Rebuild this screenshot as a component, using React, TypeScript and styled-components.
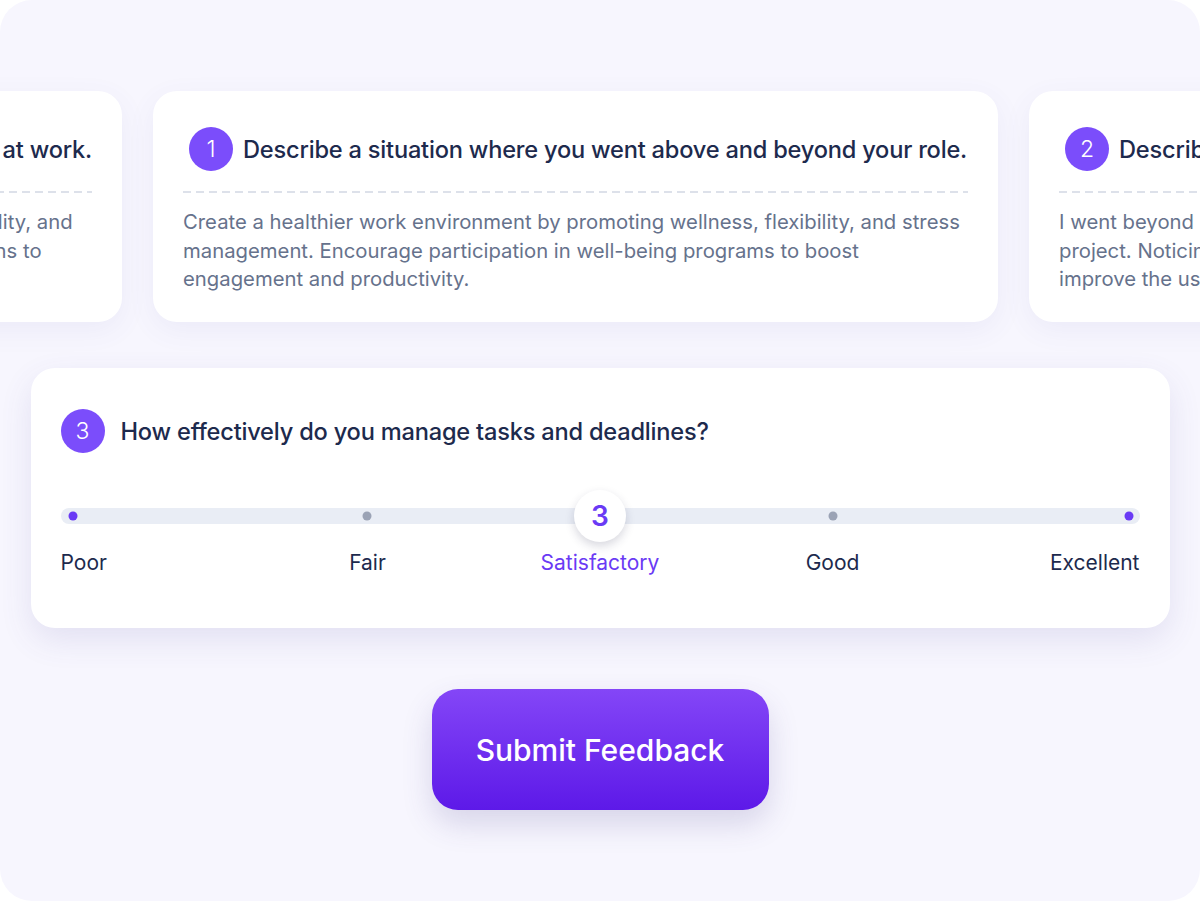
import React from 'react';
import styled, { createGlobalStyle } from 'styled-components';

const GlobalStyle = createGlobalStyle`
  html, body {
    margin: 0;
    padding: 0;
    background: #ffffff;
  }
  body {
    font-family: Inter, "Noto Sans", "Liberation Sans", sans-serif;
    -webkit-font-smoothing: antialiased;
  }
`;

interface Answer {
  id: number;
  title: string;
  lines: string[];
}

const answers: Array<Answer> = [
  {
    id: 4,
    title: 'Share one example of how you support a positive culture at work.',
    lines: [
      'Foster a healthier, calm work environment by promoting wellness, flexibility, and',
      'stress management. Encourage active participation in well-being sessions to',
      'boost engagement.',
    ],
  },
  {
    id: 1,
    title: 'Describe a situation where you went above and beyond your role.',
    lines: [
      'Create a healthier work environment by promoting wellness, flexibility, and stress',
      'management. Encourage participation in well-being programs to boost',
      'engagement and productivity.',
    ],
  },
  {
    id: 2,
    title: 'Describe a challenge you faced and how you resolved it.',
    lines: [
      'I went beyond my responsibilities by leading a critical client',
      'project. Noticing gaps in the workflow, I proposed changes to',
      'improve the user experience and delivery time.',
    ],
  },
];

const scale = [
  { label: 'Poor', pos: 'start' },
  { label: 'Fair', pos: '28.45%' },
  { label: 'Satisfactory', pos: '50%' },
  { label: 'Good', pos: '71.55%' },
  { label: 'Excellent', pos: 'end' },
];

const selected = 2;

const App = () => {
  return (
    <>
      <GlobalStyle />
      <Frame>
        <Carousel>
          {answers.map((item) => (
            <AnswerCard key={item.id}>
              <CardHeader>
                <Badge>{item.id}</Badge>
                <Question>{item.title}</Question>
              </CardHeader>
              <Dashed />
              <Body>
                {item.lines.map((line, i) => (
                  <span key={i}>{line}<br /></span>
                ))}
              </Body>
            </AnswerCard>
          ))}
        </Carousel>

        <RatingCard>
          <RatingHeader>
            <Badge>3</Badge>
            <Question>How effectively do you manage tasks and deadlines?</Question>
          </RatingHeader>

          <Slider>
            <Track>
              {scale.map((s, i) =>
                i === selected ? (
                  <Thumb key={s.label} style={{ left: s.pos }}>3</Thumb>
                ) : (
                  <Dot
                    key={s.label}
                    $active={i === 0 || i === scale.length - 1}
                    style={
                      s.pos === 'start'
                        ? { left: '12px' }
                        : s.pos === 'end'
                        ? { left: 'calc(100% - 11px)' }
                        : { left: s.pos }
                    }
                  />
                )
              )}
            </Track>
            <Labels>
              {scale.map((s, i) => (
                <Label
                  key={s.label}
                  $active={i === selected}
                  $edge={s.pos === 'start' ? 'start' : s.pos === 'end' ? 'end' : undefined}
                  style={s.pos === 'start' || s.pos === 'end' ? undefined : { left: s.pos }}
                >
                  {s.label}
                </Label>
              ))}
            </Labels>
          </Slider>
        </RatingCard>

        <SubmitButton>Submit Feedback</SubmitButton>
      </Frame>
    </>
  );
};

const Frame = styled.div`
  width: 1200px;
  height: 901px;
  box-sizing: border-box;
  background: #f7f6fe;
  border-radius: 32px;
  overflow: hidden;
  padding-top: 91px;
  display: flex;
  flex-direction: column;
  align-items: center;
`;

const Carousel = styled.div`
  align-self: flex-start;
  display: flex;
  gap: 31px;
  margin-left: -723px;
`;

const AnswerCard = styled.div`
  flex-shrink: 0;
  width: 845px;
  height: 231px;
  box-sizing: border-box;
  padding: 36px 30px 0;
  background: #ffffff;
  border-radius: 24px;
  box-shadow: 0 8px 28px rgba(90, 80, 170, 0.07);
`;

const CardHeader = styled.div`
  display: flex;
  align-items: center;
  gap: 10px;
  padding-left: 6px;
  white-space: nowrap;
`;

const Badge = styled.div`
  flex-shrink: 0;
  width: 44px;
  height: 44px;
  border-radius: 50%;
  background: #7b4dfb;
  color: #ffffff;
  font-size: 23px;
  font-weight: 300;
  display: flex;
  align-items: center;
  justify-content: center;
`;

const Question = styled.div`
  font-size: 23.6px;
  font-weight: 500;
  color: #1d2a4d;
  letter-spacing: -0.2px;
`;

const Dashed = styled.div`
  height: 2px;
  margin: 20px 0 15px;
  background-image: repeating-linear-gradient(
    to right,
    #dde1ea 0,
    #dde1ea 8px,
    transparent 8px,
    transparent 13px
  );
`;

const Body = styled.div`
  font-size: 20.3px;
  line-height: 28.5px;
  color: #66728c;
  white-space: nowrap;
`;

const RatingCard = styled.div`
  margin-top: 46px;
  width: 1139px;
  height: 260px;
  box-sizing: border-box;
  padding: 41px 30px 0;
  background: #ffffff;
  border-radius: 24px;
  box-shadow: 0 12px 32px rgba(80, 70, 160, 0.12);
`;

const RatingHeader = styled.div`
  display: flex;
  align-items: center;
  gap: 16px;
`;

const Slider = styled.div`
  margin-top: 55px;
`;

const Track = styled.div`
  position: relative;
  height: 16px;
  border-radius: 8px;
  background: #e9edf5;
`;

const Dot = styled.span<{ $active: boolean }>`
  position: absolute;
  top: 50%;
  width: 9px;
  height: 9px;
  border-radius: 50%;
  transform: translate(-50%, -50%);
  background: ${(p) => (p.$active ? '#6a3af5' : '#9ba3b5')};
`;

const Thumb = styled.div`
  position: absolute;
  top: 50%;
  width: 52px;
  height: 52px;
  border-radius: 50%;
  transform: translate(-50%, -50%);
  background: #ffffff;
  box-shadow: 0 4px 10px rgba(40, 40, 80, 0.18);
  display: flex;
  align-items: center;
  justify-content: center;
  color: #6a3af5;
  font-size: 28px;
  font-weight: 600;
`;

const Labels = styled.div`
  position: relative;
  height: 28px;
  margin-top: 25px;
`;

const Label = styled.span<{ $active: boolean; $edge?: 'start' | 'end' }>`
  position: absolute;
  top: 0;
  font-size: 21px;
  line-height: 28px;
  white-space: nowrap;
  color: ${(p) => (p.$active ? '#6a3af5' : '#1d2a4d')};
  ${(p) =>
    p.$edge === 'start'
      ? 'left: 0;'
      : p.$edge === 'end'
      ? 'right: 0;'
      : 'transform: translateX(-50%);'}
`;

const SubmitButton = styled.button`
  margin-top: 61px;
  width: 337px;
  height: 121px;
  border: none;
  border-radius: 26px;
  background: linear-gradient(180deg, #8446f7 0%, #5d19e8 100%);
  box-shadow: 0 14px 30px rgba(70, 60, 140, 0.18);
  color: #ffffff;
  font-family: inherit;
  font-size: 30px;
  font-weight: 500;
  cursor: pointer;
`;

export default App;
